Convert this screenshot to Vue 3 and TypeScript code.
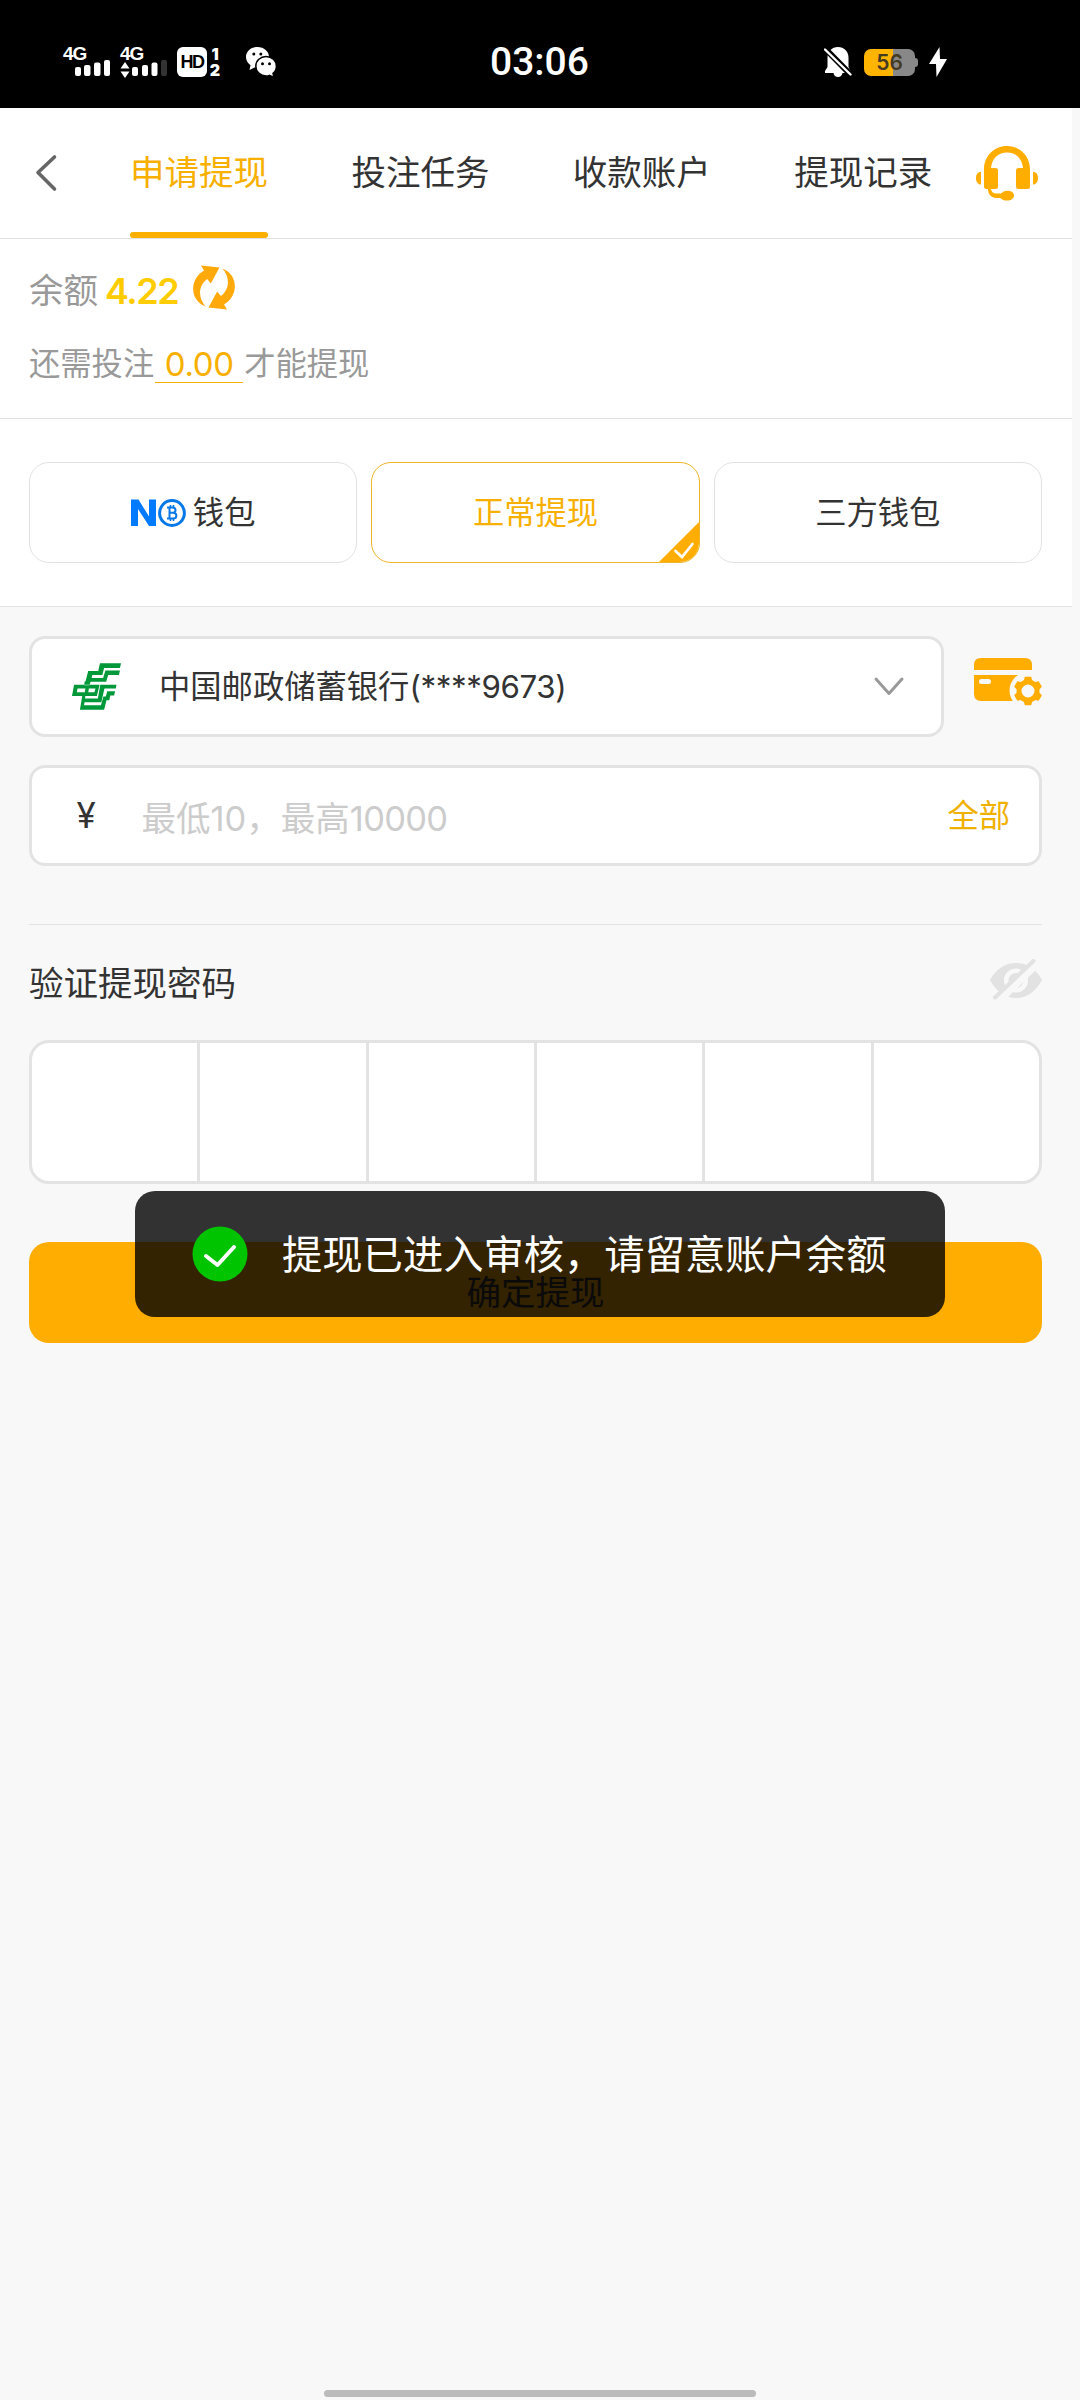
<script setup lang="ts">
import { ref } from 'vue'

interface Tab { id: string; label: string }

const tabs: Tab[] = [
  { id: 'apply', label: '申请提现' },
  { id: 'task', label: '投注任务' },
  { id: 'account', label: '收款账户' },
  { id: 'record', label: '提现记录' },
]
const activeTab = ref<string>('apply')
const balance = '4.22'
const remaining = '0.00'
const cells = 6
</script>

<template>
  <div class="screen">
    <header class="status">
      <div class="status-left">
        <div class="sig sig-a">
          <span class="net">4G</span>
          <svg width="48" height="32" viewBox="0 0 48 32"><g fill="#fff"><rect x="12" y="22" width="6" height="9" rx="2" /><rect x="21" y="20" width="6.500" height="11" rx="2" /><rect x="31" y="17.500" width="6.500" height="13.500" rx="2" /><rect x="41" y="15" width="6" height="16" rx="2" /></g></svg>
        </div>
        <div class="sig sig-b">
          <span class="net">4G</span>
          <svg width="48" height="34" viewBox="0 0 48 34"><g fill="#fff"><path d="M5 17l4.500 6.500h-9zM5 33l4.500-6.500h-9z" /><rect x="12" y="22" width="6" height="9" rx="2" /><rect x="22" y="20" width="6" height="11" rx="2" /><rect x="31.500" y="17.500" width="6" height="13.500" rx="2" /></g><rect x="41" y="15" width="6" height="16" rx="2" fill="#333" /></svg>
        </div>
        <span class="hd">HD</span>
        <span class="sims"><b>1</b><b>2</b></span>
        <svg class="wechat" width="31" height="31" viewBox="0 0 31 31">
          <path fill="#fff" d="M11.500 0C5 0 0 4.500 0 10c0 3.500 1.800 6.200 4.500 8.200L3.500 23l5-2.500c1.500.4 3 .5 4 .4C20 20.500 23 15.500 23 10 23 4.500 18 0 11.500 0z" />
          <path fill="#fff" stroke="#000" stroke-width="1.500" d="M20 9.500c-5.600 0-10.200 4.200-10.200 9.700S14.400 29 20 29c1.300 0 2.500-.2 3.500-.6l4.400 2-.9-4c2-1.700 3.400-4.200 3.400-7.200 0-5.500-4.600-9.700-10.400-9.700z" />
          <circle cx="7.800" cy="7" r="1.500" /><circle cx="14.800" cy="7" r="1.500" /><circle cx="16.500" cy="16.800" r="1.500" /><circle cx="23.500" cy="16.800" r="1.500" />
        </svg>
      </div>
      <div class="clock">03:06</div>
      <div class="status-right">
        <svg width="28" height="32" viewBox="0 0 28 32">
          <path fill="#fff" d="M14 1c6 0 10.500 4.500 10.500 10.500V21l2.500 5v1h-8.500c-.5 2.500-2 4-4.500 4s-4-1.500-4.500-4H1v-2l2.500-4v-9.500C3.500 5.500 8 1 14 1z" />
          <path stroke="#000" stroke-width="6" d="M0 1.500L28 30" /><path stroke="#fff" stroke-width="2.400" stroke-linecap="round" d="M1 3.500L26.500 28.500" />
        </svg>
        <span class="battery">56</span>
        <svg class="bolt" width="20" height="32" viewBox="0 0 20 32"><path fill="#fff" d="M11.500 1L1 18h7l.5 13L19 13h-7z" /></svg>
      </div>
    </header>

    <main class="page">
      <nav class="nav">
        <svg class="back" width="24" height="38" viewBox="0 0 24 38"><path d="M20.500 3L4 18.500 20.500 35" fill="none" stroke="#666" stroke-width="3.600" stroke-linecap="round" stroke-linejoin="round" /></svg>
        <div class="tabs">
          <a v-for="t in tabs" :key="t.id" class="tab" :class="{ active: t.id === activeTab }" @click="activeTab = t.id">{{ t.label }}</a>
        </div>
        <svg class="headset" width="62" height="56" viewBox="0 0 62 56" fill="#ffad00">
          <path d="M8 23.500C8 10 18 0 31 0s23 10 23 23.500V40.500q0 2.500-2.500 2.500H42.500q-2.500 0-2.500-2.500V24.500q0-2.500 2.500-2.500h4.500C46 12 39.500 6.500 31 6.500S16 12 15 22h4.500q2.500 0 2.500 2.500v16q0 2.500-2.500 2.500H15c.5 3 2.500 4.500 5.500 4.500h4.500c1.500-1.500 3.500-2.800 6-2.800 4.500 0 7 2 7 4.900s-2.500 5-7 5c-3 0-5-1-6.500-2.600H20C15.500 52 12 48.500 12 43H10.500Q8 43 8 40.500z" />
          <path d="M5 26v12.500C2 38.500 0 36 0 32s2-6 5-6zM57 26v12.500c3 0 5-2.500 5-6.500s-2-6-5-6z" />
        </svg>
      </nav>

      <section class="balance">
        <div class="line-a">
          <span>余额</span><b>{{ balance }}</b>
          <svg width="42" height="46" viewBox="0 0 42 46" fill="#ffa90a">
            <path d="M8 .500l18.500 2L17.800 18.500l-3.600-4.500C5.500 20.500 4.500 32 12.500 41.500 4 38-.3 31 .2 22.500.7 15 5 9 11 5.500z" />
            <path transform="rotate(180 21 22.500)" d="M8 .500l18.500 2L17.800 18.500l-3.600-4.500C5.500 20.500 4.500 32 12.500 41.500 4 38-.3 31 .2 22.500.7 15 5 9 11 5.500z" />
          </svg>
        </div>
        <div class="line-b"><span>还需投注</span><em>{{ remaining }}</em><span>才能提现</span></div>
      </section>

      <section class="methods">
        <div class="method">
          <svg class="no" width="56" height="28" viewBox="0 0 56 28">
            <path fill="#007aff" d="M0 .5h7.500L18 17.500V.5h7V27h-7L7 10v17H0z" />
            <circle cx="41" cy="14" r="12.400" fill="none" stroke="#0878e6" stroke-width="3" />
            <g fill="none" stroke="#0878e6" stroke-width="2"><path d="M36 8.500h5.500c4 0 4 5.300 0 5.300H38.500h3.500c4.500 0 4.500 5.700 0 5.700H36M38.500 8.500v11" /><path d="M39.500 6v2.500M42.500 6v2.500M39.500 19.500V22M42.500 19.500V22" stroke-width="1.600" /></g>
          </svg>
          <span>钱包</span>
        </div>
        <div class="method on">
          <span>正常提现</span>
          <svg class="corner" width="42" height="42" viewBox="0 0 42 42"><path d="M42 0v42H0z" fill="#ffad00" /><path d="M17.500 30l6.500 6 10.500-13" fill="none" stroke="#fff" stroke-width="2.700" stroke-linecap="round" /></svg>
        </div>
        <div class="method"><span>三方钱包</span></div>
      </section>

      <section class="form">
        <div class="bank-row">
          <div class="field bank">
            <svg class="logo" width="49" height="47" viewBox="209 132 142 140" preserveAspectRatio="none" fill="#009838" fill-rule="evenodd">
              <path d="M290 133H351L348 147H302L297 168H268L263 188H248L256 156H285z" />
              <path d="M306 154H348L345 168H314L308 188H250L253 177H299z" />
              <path d="M246 186H263L260 198H244zM215 197H289L281 230H209zM225 208L223 219H246L248 208zM258 208L256 219H274L277 208z" />
              <path d="M291 197H338L336 208H303L294 249H242L245 238H284z" />
              <path d="M311 216H334L331 229H320L317 243H309L302 271H232L239 228H248L244 258H293L300 232H307z" />
            </svg>
            <span class="bank-name">中国邮政储蓄银行<span class="num">(****9673)</span></span>
            <svg class="down" width="32" height="22" viewBox="0 0 32 22"><path d="M3 3l13 14.500L29 3" fill="none" stroke="#999" stroke-width="3" stroke-linecap="round" stroke-linejoin="round" /></svg>
          </div>
          <svg class="card" width="68" height="48" viewBox="0 0 68 48">
            <path fill="#ffad00" d="M0 17h58v26H7q-7 0-7-7z" />
            <rect x="5" y="21" width="12" height="5" rx="2.500" fill="#f8f8f8" />
            <circle cx="54" cy="32.500" r="18.500" fill="#f8f8f8" />
            <path fill="#ffad00" d="M0 12V7q0-7 7-7h44q7 0 7 7v5z" />
            <g transform="translate(54 33)"><circle r="9" fill="none" stroke="#ffad00" stroke-width="5" /><path v-for="a in 6" :key="a" :transform="`rotate(${a * 60})`" d="M-4.500-9.500L-3.200-14.200H3.200L4.500-9.500z" fill="#ffad00" /></g>
          </svg>
        </div>

        <div class="field amount">
          <span class="yen">¥</span>
          <span class="hint">最低10，最高<span class="num">10000</span></span>
          <span class="all">全部</span>
        </div>

        <div class="pwd-head">
          <span>验证提现密码</span>
          <svg width="52" height="42" viewBox="0 0 52 42">
            <path d="M0 21C6 10 15 4 26 4s20 6 26 17c-6 11-15 18-26 18S6 32 0 21z" fill="#e2e2e2" />
            <circle cx="26" cy="21.500" r="9.800" fill="none" stroke="#f8f8f8" stroke-width="4.500" />
            <path d="M9 42L50 2" stroke="#f8f8f8" stroke-width="7" />
            <path d="M5 38.500L43.500 2" stroke="#e2e2e2" stroke-width="4" stroke-linecap="round" />
          </svg>
        </div>
        <div class="pwd"><i v-for="n in cells" :key="n"></i></div>
        <button class="submit" type="button">确定提现</button>
      </section>
    </main>

    <div class="toast">
      <svg width="56" height="56" viewBox="0 0 56 56"><circle cx="28" cy="28" r="27.500" fill="#00c400" /><path d="M14 30l11.500 9L42 21" fill="none" stroke="#fff" stroke-width="4" stroke-linecap="round" stroke-linejoin="round" /></svg>
      <span>提现已进入审核，请留意账户余额</span>
    </div>
    <div class="home-bar"></div>
  </div>
</template>

<style>
body { background: #f8f8f8; }
</style>

<style scoped>
.screen, .screen * { box-sizing: border-box; }
.screen { position: relative; width: 1080px; height: 2400px; overflow: hidden; background: #f8f8f8; color: #333; font-family: Inter, "Noto Sans CJK SC", sans-serif; }
svg { display: block; flex: none; }

.status { display: grid; grid-template-columns: 490px 1fr 257px; height: 108px; background: #000; color: #fff; }
.status-left { display: flex; padding-left: 63px; padding-top: 45px; }
.sig { position: relative; width: 48px; height: 34px; margin-right: 9px; }
.net { position: absolute; left: 0; top: -1px; font: 700 19px/19px "Liberation Sans", sans-serif; letter-spacing: -1px; }
.hd { width: 30px; height: 30px; margin-top: 2px; border-radius: 6px; background: #fff; color: #000; font: 700 18px/30px "Liberation Sans", sans-serif; text-align: center; letter-spacing: -1.500px; }
.sims { display: flex; flex-direction: column; width: 12px; margin: 2px 25px 0 2px; font: 700 16px/15.500px Inter, sans-serif; text-align: center; }
.sims b { display: block; height: 16px; }
.wechat { margin-top: 2px; }
.clock { padding-top: 38px; font-family: Roboto, sans-serif; font-size: 39px; font-weight: 500; line-height: 48px; }
.status-right { display: flex; padding-top: 46px; padding-left: 1px; }
.battery { position: relative; width: 51px; height: 27px; margin: 3px 0 0 12px; border-radius: 7px; background: linear-gradient(90deg, #ffb400 57%, #888 57%); color: #453a22; font-size: 21px; font-weight: 600; line-height: 28px; text-align: center; }
.battery::after { content: ""; position: absolute; right: -3px; top: 9px; width: 4px; height: 9px; border-radius: 0 3px 3px 0; background: #888; }
.bolt { margin-left: 13px; }

.page { width: 1072px; }
.nav { display: flex; height: 131px; background: #fff; border-bottom: 1px solid #e2e2e2; }
.back { margin: 46px 0 0 34px; }
.tabs { display: flex; gap: 83.400px; margin-left: 72px; }
.tab { position: relative; width: 138px; font-size: 34.500px; line-height: 130px; white-space: nowrap; }
.tab.active { color: #f7b000; }
.tab.active::after { content: ""; position: absolute; left: 0; bottom: 0; width: 138px; height: 6px; border-radius: 3px; background: #fbaf00; }
.headset { margin: 38px 0 0 43.400px; }

.balance { height: 180px; padding: 24px 0 0 29px; background: #fff; border-bottom: 1px solid #e2e2e2; color: #999; }
.line-a { display: flex; align-items: center; height: 50px; font-size: 34.500px; line-height: 50px; }
.line-a span, .line-a b { padding-top: 5px; }
.line-a b { margin: 0 15px 0 7px; color: #ffcc00; font-size: 36px; font-weight: 600; letter-spacing: -1.500px; }
.line-b { display: flex; height: 40px; margin-top: 30px; font-size: 31.300px; line-height: 43px; }
.line-b em { width: 88px; height: 40px; border-bottom: 1px solid #f5b000; margin: 0 1px; color: #f7b000; font-size: 33px; font-style: normal; text-align: center; letter-spacing: -.400px; }

.methods { display: flex; gap: 14px; height: 188px; padding: 43px 30px 0 29px; background: #fff; border-bottom: 1px solid #e2e2e2; }
.method { position: relative; flex: 1; display: flex; align-items: center; justify-content: center; height: 101px; border: 1px solid #e2e2e2; border-radius: 20px; font-size: 31.300px; overflow: hidden; }
.method span { padding-bottom: 4px; }
.method.on { border-color: #efb52a; color: #f7b000; }
.no { margin-right: 6px; }
.corner { position: absolute; right: -1px; bottom: -1px; }

.form { padding: 29px 30px 0 29px; }
.bank-row { display: flex; }
.field { display: flex; align-items: center; height: 101px; border: 3px solid #e3e3e3; border-radius: 16px; background: #fff; }
.bank { width: 915px; }
.logo { margin-left: 40px; }
.bank-name { margin-left: 38px; padding-bottom: 4px; flex: 1; font-size: 31.300px; white-space: nowrap; }
.bank-name .num { letter-spacing: -.400px; }
.down { margin-right: 36px; }
.card { margin: 22px 0 0 30px; }
.amount { margin-top: 28px; }
.yen { width: 65px; margin-left: 44.500px; padding-bottom: 2px; font-size: 35px; }
.hint { flex: 1; color: #ccc; font-size: 34.500px; }
.hint .num { letter-spacing: -.700px; }
.all { margin-right: 29px; padding-bottom: 4px; color: #f0b000; font-size: 31.300px; }
.pwd-head { display: flex; justify-content: space-between; height: 116px; margin-top: 58px; border-top: 1px solid #e2e2e2; font-size: 34.500px; line-height: 118px; }
.pwd-head svg { margin-top: 34px; }
.pwd { display: flex; height: 144px; border: 3px solid #e3e3e3; border-radius: 20px; background: #fff; }
.pwd i { box-sizing: content-box; flex: 1; border-right: 3px solid #e3e3e3; }
.pwd i:last-child { border-right: 0; }
.submit { display: block; width: 100%; height: 101px; margin-top: 58px; padding: 0; border: 0; border-radius: 20px; background: #ffad00; color: #333; font: 34.500px/100px Inter, "Noto Sans CJK SC", sans-serif; }

.toast { position: absolute; left: 135px; top: 1191px; display: flex; align-items: center; width: 810px; height: 126px; padding-left: 57px; border-radius: 20px; background: rgba(0, 0, 0, .8); color: #fff; font-size: 40.300px; white-space: nowrap; }
.toast span { margin-left: 34px; padding-bottom: 6px; }
.home-bar { position: absolute; left: 324px; top: 2390px; width: 432px; height: 7px; border-radius: 4px; background: #bbb; }
</style>
